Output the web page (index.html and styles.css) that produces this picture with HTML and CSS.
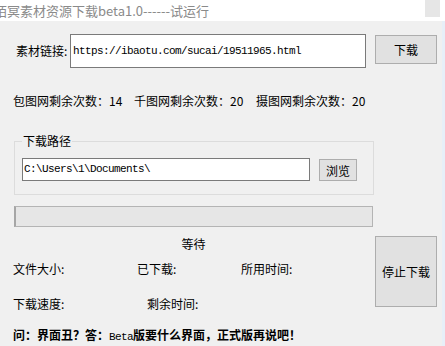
FILE: index.html
```html
<!DOCTYPE html>
<html>
<head>
<meta charset="utf-8">
<link rel="stylesheet" href="styles.css">
</head>
<body>
<div class="titlebar"><span class="title">陌冥素材资源下载beta1.0------试运行</span><span class="ctrl"></span></div>
<div class="content">
  <div class="row-url">
    <span class="url-label">素材链接:</span>
    <div class="input url-input">https://ibaotu.com/sucai/19511965.html</div>
    <button class="btn btn-dl">下载</button>
  </div>
  <div class="stats"><span>包图网剩余次数：14</span><span>千图网剩余次数：20</span><span>摄图网剩余次数：20</span></div>
  <fieldset class="group">
    <legend>下载路径</legend>
    <div class="path-row">
      <div class="input path-input">C:\Users\1\Documents\</div>
      <button class="btn btn-browse">浏览</button>
    </div>
  </fieldset>
  <div class="progress"></div>
  <div class="lower">
    <div class="info">
      <div class="status">等待</div>
      <div class="info-row r1"><span class="c1">文件大小:</span><span class="c2">已下载:</span><span>所用时间:</span></div>
      <div class="info-row r2"><span class="d1">下载速度:</span><span>剩余时间:</span></div>
    </div>
    <button class="btn btn-stop">停止下载</button>
  </div>
  <div class="note">问：界面丑？答：<span class="mono">Beta</span>版要什么界面，正式版再说吧！</div>
</div>
</body>
</html>
```

FILE: styles.css
```css
* { box-sizing: border-box; }
html, body { margin: 0; padding: 0; }
body {
  width: 445px;
  height: 346px;
  overflow: hidden;
  background: #f0f0f0;
  font-family: "Noto Sans CJK SC", "Noto Sans", sans-serif;
  font-size: 12px;
  color: #000;
}
.titlebar {
  height: 21px;
  background: #fff;
  display: flex;
  align-items: center;
  overflow: hidden;
}
.title {
  margin-left: -6px;
  font-size: 13px;
  line-height: 21px;
  color: #8a8a8a;
  white-space: nowrap;
}
.ctrl {
  margin-left: auto;
  margin-right: 5px;
  align-self: flex-start;
  width: 15px;
  height: 17px;
  background: #e6e6e6;
}
.content {
  height: 325px;
  padding-left: 13px;
  border-right: 3px solid #e7eff8;
  overflow: hidden;
}
.row-url {
  margin-top: 13px;
  display: flex;
  align-items: flex-start;
}
.url-label {
  margin-left: 3px;
  width: 54px;
  line-height: 34px;
  white-space: nowrap;
}
.input {
  background: #fff;
  border: 1px solid #7a7a7a;
  font-family: "Liberation Mono", monospace;
  font-size: 11px;
  letter-spacing: -0.6px;
  padding-left: 2px;
  white-space: nowrap;
  overflow: hidden;
}
.url-input {
  width: 296px;
  height: 34px;
  line-height: 32px;
}
.btn {
  background: #e1e1e1;
  border: 1px solid #adadad;
  font-family: "Noto Sans CJK SC", sans-serif;
  font-size: 12px;
  color: #000;
  padding: 0;
  margin: 0;
}
.btn-dl {
  margin-left: 9px;
  margin-top: 1px;
  width: 62px;
  height: 29px;
}
.stats {
  margin-top: 26px;
  display: grid;
  grid-template-columns: 121px 122px auto;
  line-height: 14px;
  white-space: nowrap;
}
.group {
  margin: 26px 0 0 1px;
  width: 360px;
  border: 1px solid #dcdcdc;
  padding: 10px 7px 13px;
  min-width: 0;
}
.group legend {
  padding: 0 1px;
  line-height: 14px;
}
.path-row {
  display: flex;
  align-items: flex-start;
}
.path-input {
  width: 288px;
  height: 23px;
  line-height: 21px;
  padding-left: 1px;
}
.btn-browse {
  margin-left: 9px;
  margin-top: 1px;
  width: 38px;
  height: 22px;
}
.progress {
  margin: 11px 0 0 1px;
  width: 359px;
  height: 21px;
  background: #e6e6e6;
  border: 1px solid #b4b4b4;
  border-left: 2px solid #a6a6a6;
}
.lower {
  display: flex;
  align-items: flex-start;
}
.info {
  width: 362px;
}
.status {
  margin: 10px 0 0 1px;
  width: 359px;
  text-align: center;
  line-height: 14px;
}
.info-row {
  display: flex;
  line-height: 14px;
  white-space: nowrap;
}
.r1 { margin-top: 11px; }
.r2 { margin-top: 21px; }
.c1 { width: 124px; }
.c2 { width: 104px; }
.d1 { width: 134px; }
.btn-stop {
  margin-top: 9px;
  width: 62px;
  height: 71px;
}
.note {
  margin-top: 17px;
  line-height: 14px;
  font-weight: bold;
  white-space: nowrap;
}
.mono {
  font-family: "Liberation Mono", monospace;
  font-weight: normal;
  font-size: 11px;
  letter-spacing: -0.6px;
}
```
